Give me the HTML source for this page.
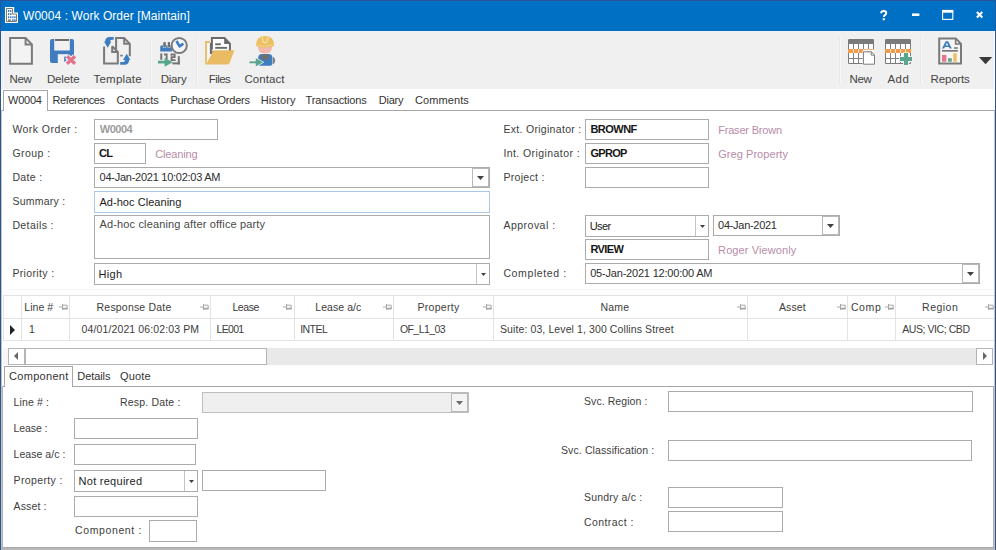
<!DOCTYPE html>
<html>
<head>
<meta charset="utf-8">
<title>W0004 : Work Order [Maintain]</title>
<style>
*{box-sizing:border-box;margin:0;padding:0}
html,body{width:996px;height:550px;overflow:hidden;background:#fff}
body{position:relative;font-family:"Liberation Sans",sans-serif;font-size:12px;color:#3a3a3a}
.a{position:absolute}
.t{position:absolute;white-space:nowrap;line-height:14px}
.f{position:absolute;background:#fff;border:1px solid #ababab}
.dd{position:absolute;top:0;bottom:0;right:0;width:17px;border:1px solid #b9b9b9;background:#fff}
.dd:after{content:"";position:absolute;left:4px;top:7px;width:7px;height:4px;background:#404040;clip-path:polygon(0 0,100% 0,50% 100%)}
.dd.dis:after{background:#6a6a6a}
.cb{position:absolute;top:0;bottom:0;right:0;width:13px;border-left:1px solid #c4c4c4}
.cb:after{content:"";position:absolute;left:4px;top:9px;width:5px;height:3px;background:#404040;clip-path:polygon(0 0,100% 0,50% 100%)}
.vl{position:absolute;width:1px;background:#e3e3e3;top:295px;height:46px}
.hl{position:absolute;height:1px;background:#e3e3e3;left:3px;width:991px}
.pin{position:absolute;top:304px;width:10px;height:6px}
svg{position:absolute;overflow:visible}
</style>
</head>
<body>
<!-- window frame / title bar -->
<div class="a" style="left:0;top:0;width:996px;height:31px;background:#0070c4"></div>
<div class="a" style="left:0;top:0;width:996px;height:1px;background:#2a5699"></div>

<!-- toolbar -->
<div class="a" style="left:1px;top:31px;width:993px;height:58px;background:#f0f0f0"></div>
<!--ICONS_START-->
<svg width="996" height="92" viewBox="0 0 996 92" style="left:0;top:0">
<!-- app icon -->
<path d="M5,7 H14.2 V12.6 H18 V23 H5 Z" fill="#fff"/>
<path d="M6.5,8.5 H12.6 V14.1 H16.5 V21.5 H6.5 Z" fill="none" stroke="#82786f" stroke-width="1"/>
<g fill="#1a66b8">
<rect x="8.1" y="10" width="1.2" height="1.9"/><rect x="10.2" y="10" width="1.2" height="1.9"/>
<rect x="8.1" y="13.2" width="1.2" height="1.9"/><rect x="10.2" y="13.2" width="1.2" height="1.9"/>
<rect x="8.1" y="16.3" width="1.2" height="1.9"/><rect x="10.2" y="16.3" width="1.2" height="1.9"/>
<rect x="12.3" y="16.3" width="1.2" height="1.9"/><rect x="14.3" y="16.3" width="1.2" height="1.9"/>
<rect x="12.3" y="19.2" width="1.2" height="1.9"/><rect x="14.3" y="19.2" width="1.2" height="1.9"/>
</g>
<rect x="8" y="19.4" width="2.8" height="2" fill="#82786f"/>
<!-- window controls -->
<path d="M881.2,13.2 Q881.2,10.9 883.7,10.9 Q886.2,10.9 886.2,13 Q886.2,14.4 884.9,15.1 Q883.8,15.7 883.8,17.1" fill="none" stroke="#fff" stroke-width="2"/>
<rect x="882.7" y="18.2" width="2.2" height="2.1" fill="#fff"/>
<rect x="912" y="13.4" width="7.4" height="2.6" fill="#fff"/>
<rect x="942.6" y="11" width="10.2" height="8.4" fill="none" stroke="#fff" stroke-width="1.1"/>
<rect x="942" y="9.9" width="11.3" height="2.8" fill="#fff"/>
<path d="M976.9,11.9 L982.3,17.4 M982.3,11.9 L976.9,17.4" stroke="#fff" stroke-width="2.1" fill="none"/>

<!-- separators -->
<g>
<rect x="150" y="37" width="1" height="47" fill="#e8e8e8"/><rect x="151" y="37" width="1" height="47" fill="#f6f6f6"/>
<rect x="196" y="37" width="1" height="47" fill="#e8e8e8"/><rect x="197" y="37" width="1" height="47" fill="#f6f6f6"/>
<rect x="839" y="37" width="1" height="47" fill="#e8e8e8"/><rect x="840" y="37" width="1" height="47" fill="#f6f6f6"/>
<rect x="920" y="37" width="1" height="47" fill="#e8e8e8"/><rect x="921" y="37" width="1" height="47" fill="#f6f6f6"/>
</g>

<!-- New -->
<g fill="none" stroke="#7a7a7a" stroke-width="2" stroke-linejoin="miter">
<path d="M10.1,38.1 H25.6 L31.9,44.4 V63.7 H10.1 Z" fill="#f3f3f3"/>
<path d="M25.6,38.1 V44.4 H31.9"/>
</g>

<!-- Delete -->
<rect x="50" y="39" width="24" height="24" rx="2" fill="#3f7cc0"/>
<rect x="54.2" y="38.5" width="15.6" height="12" fill="#f1f1f1"/>
<rect x="55" y="39" width="14" height="2" fill="#6e6e6e"/>
<rect x="57.8" y="54.2" width="10.5" height="9.3" fill="#f1f1f1"/>
<rect x="64.2" y="56.6" width="1.9" height="5" fill="#3f7cc0"/>
<path d="M67,56.3 L75,63.7 M75,56.3 L67,63.7" stroke="#f1f1f1" stroke-width="5.6" fill="none"/>
<path d="M67,56.3 L75,63.7 M75,56.3 L67,63.7" stroke="#e3728c" stroke-width="3.3" fill="none"/>

<!-- Template -->
<g fill="none" stroke="#7a7a7a" stroke-width="2">
<path d="M116.1,49.5 V38.1 H124.2 L129.8,43.8 V56.2"/>
<path d="M124.2,38.1 V43.8 H129.8"/>
<path d="M120.2,55.6 H122.8" stroke-width="1.6"/>
<path d="M104.1,46.5 V63.5 H117.8 V52 L112.2,46.2"/>
<path d="M112.2,46.2 V52 H117.8"/>
</g>
<g fill="#3f7cc0">
<path d="M113.7,37 H109.4 Q105.2,37 105.2,41.6 H104 L107.7,47.8 L111.3,41.6 H110 Q110,39.8 112,39.8 H113.7 Z"/>
<path d="M120.2,64.8 V62.1 H123.4 Q124.9,62.1 124.9,60 H123 L126.7,53.7 L130.4,60 H129.1 Q129.1,64.8 124.4,64.8 Z"/>
</g>

<!-- Diary -->
<path d="M160.2,51.6 V47 Q160.2,45.2 162,45.2 H172 V51.6 Z" fill="#3f7cc0"/>
<rect x="162.9" y="41.8" width="3.2" height="6" fill="#f1f1f1"/>
<rect x="167.5" y="41.8" width="2.9" height="6" fill="#f1f1f1"/>
<rect x="163.3" y="42.1" width="2.5" height="5.3" fill="#6c6c6c"/>
<rect x="167.8" y="42.1" width="2.2" height="5.3" fill="#6c6c6c"/>
<g fill="#737373">
<rect x="160.3" y="53.4" width="2" height="6.4"/>
<rect x="177.8" y="56.2" width="2" height="8.2"/>
<rect x="172.4" y="62.4" width="7.4" height="2"/>
<path d="M164,53.5 H167.6 V59.5 H165.7 V55.4 H164 Z"/>
<path d="M170.6,55.8 V53.5 H175.6 V58 H172.7 V59.2 H175.6 V61.1 H170.6 V56.3 H173.6 V55.3 H172.5 V55.8 Z"/>
</g>
<circle cx="179.2" cy="45.5" r="7.6" fill="#f5f5f5" stroke="#7a7a7a" stroke-width="2"/>
<path d="M176.5,41 L179.6,46.4 L183.4,43.6" fill="none" stroke="#3f7cc0" stroke-width="2.6" stroke-linejoin="round"/>
<path d="M158,60.8 H164.6 V57.8 L172.8,62.2 L164.6,66.8 V63.6 H158 Z" fill="#5aa58d"/>

<!-- Files -->
<path d="M205.1,41.1 H209.8 V43 H207 V62 L205.5,64.4 H205.1 Z" fill="#e9bb63"/>
<path d="M211.9,53 V38.1 H224.5 L229.9,43.6 V51" fill="#fff" stroke="#6a6a6a" stroke-width="2"/>
<path d="M224.2,38 L230.2,44 H224.2 Z" fill="#6a6a6a"/>
<rect x="215.2" y="43.3" width="5.6" height="1.9" fill="#6a6a6a"/>
<rect x="215.2" y="46.9" width="11.8" height="1.9" fill="#6a6a6a"/>
<path d="M213.6,50.2 H234.4 L229.6,63 Q229,64.4 227.6,64.4 H205.6 L207.4,62 Z" fill="#e9bb63"/>
<path d="M206.9,43 V62.5 L213.2,49.5 H211 V43 Z" fill="#f6f6f6"/>
<path d="M210.9,43 V54 " stroke="#6a6a6a" stroke-width="2" fill="none"/>

<!-- Contact -->
<path d="M257.8,46 H272.2 Q272.4,53.6 265,53.6 Q257.6,53.6 257.8,46 Z" fill="#f1b9b0"/>
<path d="M256,45.2 Q256.3,36 265.1,36 Q273.9,36 274.2,45.2 Q274.2,46.5 272.8,46.5 Q265,48.4 257.4,46.5 Q256,46.5 256,45.2 Z" fill="#edc163"/>
<path d="M262,37.2 L263.2,42 Q265.1,43.2 267,42 L268.2,37.2" fill="none" stroke="#f6e2b4" stroke-width="1.1"/>
<path d="M257,45 Q265,47.2 273.2,45" fill="none" stroke="#f3d596" stroke-width="0.8"/>
<path d="M258.2,58 Q258.2,53.9 262,53.9 H268.6 Q272.4,53.9 272.4,58 V63.5 Q272.4,65.8 270,65.8 H260.5 Q258.2,65.8 258.2,63.5 Z" fill="#3f7cc0"/>
<rect x="261" y="54.4" width="8" height="5" rx="0.8" fill="#707070"/>
<path d="M272.9,56.6 Q275.2,58 275.2,60.5 Q275.2,63 272.9,64.2 Z" fill="#808080"/>
<path d="M249,61 H255.4 V57.5 L263.7,62.3 L255.4,67.1 V63.7 H249 Z" fill="#5aa58d" stroke="#f1f1f1" stroke-width="0.8"/>

<!-- grid New -->
<rect x="848" y="39" width="26" height="25" rx="1.2" fill="#7a7a7a"/>
<rect x="849" y="44" width="24" height="19" fill="#fff"/>
<rect x="853" y="44" width="1" height="19" fill="#808080"/>
<rect x="858" y="44" width="1" height="19" fill="#808080"/>
<rect x="863" y="44" width="1" height="19" fill="#808080"/>
<rect x="868" y="44" width="1" height="19" fill="#808080"/>
<rect x="849" y="58" width="24" height="1" fill="#808080"/>
<rect x="848" y="49" width="26" height="4" fill="#f19a47"/>
<rect x="853" y="49" width="1" height="4" fill="#fbe6d2"/>
<rect x="858" y="49" width="1" height="4" fill="#fbe6d2"/>
<rect x="863" y="49" width="1" height="4" fill="#fbe6d2"/>
<rect x="868" y="49" width="1" height="4" fill="#fbe6d2"/>
<rect x="864" y="49.8" width="10" height="3.4" fill="#fff"/>
<path d="M862.4,50.8 H872 L875.5,54.3 V65.2 H862.4 Z" fill="#f6f6f6"/>
<path d="M863.4,51.8 H871.4 L874.5,54.9 V64.2 H863.4 Z" fill="#fff" stroke="#7a7a7a" stroke-width="1"/>
<path d="M871.2,52 V55.1 H874.4" fill="none" stroke="#7a7a7a" stroke-width="1"/>

<!-- grid Add -->
<rect x="885" y="39" width="26" height="25" rx="1.2" fill="#7a7a7a"/>
<rect x="886" y="44" width="24" height="19" fill="#fff"/>
<rect x="890" y="44" width="1" height="19" fill="#808080"/>
<rect x="895" y="44" width="1" height="19" fill="#808080"/>
<rect x="900" y="44" width="1" height="19" fill="#808080"/>
<rect x="905" y="44" width="1" height="19" fill="#808080"/>
<rect x="886" y="58" width="24" height="1" fill="#808080"/>
<rect x="885" y="49" width="26" height="4" fill="#f19a47"/>
<rect x="890" y="49" width="1" height="4" fill="#fbe6d2"/>
<rect x="895" y="49" width="1" height="4" fill="#fbe6d2"/>
<rect x="900" y="49" width="1" height="4" fill="#fbe6d2"/>
<rect x="905" y="49" width="1" height="4" fill="#fbe6d2"/>
<path d="M903.2,52.3 H908.8 V56.3 H912.8 V61.9 H908.8 V65.9 H903.2 V61.9 H899.2 V56.3 H903.2 Z" fill="#f4f4f4"/>
<path d="M904,53.1 H908 V57.1 H912 V61.1 H908 V65.1 H904 V61.1 H900 V57.1 H904 Z" fill="#5aa58d"/>

<!-- Reports -->
<path d="M939.2,38.5 H955.8 L961,43.8 V63.5 H939.2 Z" fill="#f6f6f6" stroke="#7a7a7a" stroke-width="2"/>
<path d="M955.6,38.5 V44 H961" fill="none" stroke="#7a7a7a" stroke-width="1.6"/>
<path d="M942,48.5 L945.6,41.3 H948.2 L951.8,48.5 H949.6 L948.9,47 H944.9 L944.2,48.5 Z M945.6,45.4 H948.2 L946.9,42.7 Z" fill="#3f7cc0" fill-rule="evenodd"/>
<rect x="954" y="47.2" width="3.8" height="1.6" fill="#7a7a7a"/>
<rect x="942" y="50" width="15.8" height="1.7" fill="#7a7a7a"/>
<rect x="942" y="54.9" width="4.4" height="6.8" fill="#e8748e"/>
<rect x="948" y="58.2" width="3.8" height="3.5" fill="#5aa58d"/>
<rect x="953.2" y="53.3" width="3.6" height="8.4" fill="#edc163"/>
<path d="M978.9,57.1 H992.2 L985.55,64.3 Z" fill="#3a3a3a"/>
</svg>
<!--ICONS_END-->

<!-- main tabs -->
<div class="a" style="left:1px;top:110px;width:993px;height:1px;background:#a6a6a6"></div>
<div class="a" style="left:3px;top:90px;width:45px;height:21px;background:#fff;border:1px solid #a6a6a6;border-bottom:none"></div>

<!-- form fields left -->
<div class="f" style="left:94px;top:119px;width:124px;height:21px"></div>
<div class="f" style="left:94px;top:143px;width:52px;height:21px"></div>
<div class="f" style="left:94px;top:167px;width:396px;height:21px"><div class="dd"></div></div>
<div class="f" style="left:94px;top:191px;width:396px;height:22px;border-color:#a9c7ec"></div>
<div class="f" style="left:94px;top:215px;width:396px;height:44px"></div>
<div class="f" style="left:94px;top:263px;width:396px;height:22px"><div class="cb"></div></div>

<!-- form fields right -->
<div class="f" style="left:585px;top:119px;width:124px;height:21px"></div>
<div class="f" style="left:585px;top:143px;width:124px;height:21px"></div>
<div class="f" style="left:585px;top:167px;width:124px;height:21px"></div>
<div class="f" style="left:585px;top:215px;width:124px;height:22px"><div class="cb"></div></div>
<div class="f" style="left:713px;top:215px;width:127px;height:21px"><div class="dd"></div></div>
<div class="f" style="left:585px;top:239px;width:124px;height:21px"></div>
<div class="f" style="left:585px;top:263px;width:395px;height:21px"><div class="dd"></div></div>

<!-- grid -->
<div class="a" style="left:8px;top:289px;width:985px;height:1px;background:#f4f4f4"></div>
<div class="hl" style="top:295px"></div>
<div class="hl" style="top:318px"></div>
<div class="hl" style="top:340px"></div>
<div class="vl" style="left:3px"></div>
<div class="vl" style="left:21px"></div>
<div class="vl" style="left:69px"></div>
<div class="vl" style="left:210px"></div>
<div class="vl" style="left:294px"></div>
<div class="vl" style="left:393px"></div>
<div class="vl" style="left:493px"></div>
<div class="vl" style="left:747px"></div>
<div class="vl" style="left:847px"></div>
<div class="vl" style="left:895px"></div>
<div class="a" style="left:10px;top:325px;border-top:5px solid transparent;border-bottom:5px solid transparent;border-left:5px solid #222"></div>
<!--PINS_START-->
<svg class="pin" style="left:59px" viewBox="0 0 10 6"><path d="M0,3 H3.5 M3.5,0 V6 M3.5,1.2 H8.2 V5 H3.5" fill="none" stroke="#a9a9a9" stroke-width="1"/><path d="M3.5,4.4 H8.7" stroke="#a9a9a9" stroke-width="1.5"/></svg>
<svg class="pin" style="left:199.5px" viewBox="0 0 10 6"><path d="M0,3 H3.5 M3.5,0 V6 M3.5,1.2 H8.2 V5 H3.5" fill="none" stroke="#a9a9a9" stroke-width="1"/><path d="M3.5,4.4 H8.7" stroke="#a9a9a9" stroke-width="1.5"/></svg>
<svg class="pin" style="left:283.2px" viewBox="0 0 10 6"><path d="M0,3 H3.5 M3.5,0 V6 M3.5,1.2 H8.2 V5 H3.5" fill="none" stroke="#a9a9a9" stroke-width="1"/><path d="M3.5,4.4 H8.7" stroke="#a9a9a9" stroke-width="1.5"/></svg>
<svg class="pin" style="left:383px" viewBox="0 0 10 6"><path d="M0,3 H3.5 M3.5,0 V6 M3.5,1.2 H8.2 V5 H3.5" fill="none" stroke="#a9a9a9" stroke-width="1"/><path d="M3.5,4.4 H8.7" stroke="#a9a9a9" stroke-width="1.5"/></svg>
<svg class="pin" style="left:483px" viewBox="0 0 10 6"><path d="M0,3 H3.5 M3.5,0 V6 M3.5,1.2 H8.2 V5 H3.5" fill="none" stroke="#a9a9a9" stroke-width="1"/><path d="M3.5,4.4 H8.7" stroke="#a9a9a9" stroke-width="1.5"/></svg>
<svg class="pin" style="left:737.3px" viewBox="0 0 10 6"><path d="M0,3 H3.5 M3.5,0 V6 M3.5,1.2 H8.2 V5 H3.5" fill="none" stroke="#a9a9a9" stroke-width="1"/><path d="M3.5,4.4 H8.7" stroke="#a9a9a9" stroke-width="1.5"/></svg>
<svg class="pin" style="left:837.3px" viewBox="0 0 10 6"><path d="M0,3 H3.5 M3.5,0 V6 M3.5,1.2 H8.2 V5 H3.5" fill="none" stroke="#a9a9a9" stroke-width="1"/><path d="M3.5,4.4 H8.7" stroke="#a9a9a9" stroke-width="1.5"/></svg>
<svg class="pin" style="left:885.3px" viewBox="0 0 10 6"><path d="M0,3 H3.5 M3.5,0 V6 M3.5,1.2 H8.2 V5 H3.5" fill="none" stroke="#a9a9a9" stroke-width="1"/><path d="M3.5,4.4 H8.7" stroke="#a9a9a9" stroke-width="1.5"/></svg>
<svg class="pin" style="left:985.3px" viewBox="0 0 10 6"><path d="M0,3 H3.5 M3.5,0 V6 M3.5,1.2 H8.2 V5 H3.5" fill="none" stroke="#a9a9a9" stroke-width="1"/><path d="M3.5,4.4 H8.7" stroke="#a9a9a9" stroke-width="1.5"/></svg>
<!--PINS_END-->

<!-- scrollbar -->
<div class="a" style="left:3px;top:348px;width:991px;height:17px;background:#f6f6f6"></div><div class="a" style="left:8px;top:348px;width:985px;height:17px;background:#e9e9e9"></div>
<div class="a" style="left:8px;top:348px;width:17px;height:17px;background:#fff;border:1px solid #b4b4b4"></div>
<div class="a" style="left:14px;top:352px;border-top:4px solid transparent;border-bottom:4px solid transparent;border-right:4px solid #666"></div>
<div class="a" style="left:25px;top:348px;width:242px;height:17px;background:#fff;border:1px solid #b4b4b4"></div>
<div class="a" style="left:976px;top:348px;width:17px;height:17px;background:#fff;border:1px solid #b4b4b4"></div>
<div class="a" style="left:983px;top:352px;border-top:4px solid transparent;border-bottom:4px solid transparent;border-left:4px solid #666"></div>

<!-- bottom tabs -->
<div class="a" style="left:2px;top:386px;width:992px;height:1px;background:#a6a6a6"></div>
<div class="a" style="left:4px;top:366px;width:69px;height:21px;background:#fff;border:1px solid #a6a6a6;border-bottom:none"></div>

<!-- bottom panel fields -->
<div class="f" style="left:202px;top:392px;width:267px;height:21px;background:#efefef;border-color:#bdbdbd"><div class="dd dis" style="background:#f4f4f4"></div></div>
<div class="f" style="left:74px;top:418px;width:124px;height:21px"></div>
<div class="f" style="left:74px;top:444px;width:122px;height:21px"></div>
<div class="f" style="left:74px;top:470px;width:124px;height:22px"><div class="cb"></div></div>
<div class="f" style="left:202px;top:470px;width:124px;height:21px"></div>
<div class="f" style="left:74px;top:496px;width:124px;height:21px"></div>
<div class="f" style="left:149px;top:520px;width:48px;height:22px"></div>
<div class="f" style="left:668px;top:391px;width:305px;height:21px"></div>
<div class="f" style="left:668px;top:440px;width:304px;height:21px"></div>
<div class="f" style="left:668px;top:487px;width:115px;height:21px"></div>
<div class="f" style="left:668px;top:511px;width:115px;height:21px"></div>

<div class="t" style="left:23.00px;top:9.04px;font-size:12px;color:#ffffff;letter-spacing:0.059px">W0004 : Work Order [Maintain]</div>
<div class="t" style="left:9.60px;top:71.62px;font-size:11.5px;color:#444444;letter-spacing:-0.350px">New</div>
<div class="t" style="left:46.90px;top:71.62px;font-size:11.5px;color:#444444;letter-spacing:-0.109px">Delete</div>
<div class="t" style="left:93.60px;top:71.62px;font-size:11.5px;color:#444444;letter-spacing:0.190px">Template</div>
<div class="t" style="left:160.70px;top:71.62px;font-size:11.5px;color:#444444;letter-spacing:-0.221px">Diary</div>
<div class="t" style="left:208.80px;top:71.62px;font-size:11.5px;color:#444444;letter-spacing:-0.558px">Files</div>
<div class="t" style="left:244.40px;top:71.62px;font-size:11.5px;color:#444444;letter-spacing:0.077px">Contact</div>
<div class="t" style="left:849.40px;top:71.62px;font-size:11.5px;color:#444444;letter-spacing:-0.250px">New</div>
<div class="t" style="left:887.40px;top:71.62px;font-size:11.5px;color:#444444;letter-spacing:0.467px">Add</div>
<div class="t" style="left:930.60px;top:71.62px;font-size:11.5px;color:#444444;letter-spacing:-0.186px">Reports</div>
<div class="t" style="left:8.00px;top:93.19px;font-size:11px;color:#333333;letter-spacing:-0.234px">W0004</div>
<div class="t" style="left:52.60px;top:93.19px;font-size:11px;color:#333333;letter-spacing:-0.439px">References</div>
<div class="t" style="left:116.50px;top:93.19px;font-size:11px;color:#333333;letter-spacing:-0.173px">Contacts</div>
<div class="t" style="left:170.40px;top:93.19px;font-size:11px;color:#333333;letter-spacing:-0.260px">Purchase Orders</div>
<div class="t" style="left:260.80px;top:93.19px;font-size:11px;color:#333333;letter-spacing:0.079px">History</div>
<div class="t" style="left:305.60px;top:93.19px;font-size:11px;color:#333333;letter-spacing:-0.124px">Transactions</div>
<div class="t" style="left:378.70px;top:93.19px;font-size:11px;color:#333333;letter-spacing:-0.217px">Diary</div>
<div class="t" style="left:415.00px;top:93.19px;font-size:11px;color:#333333;letter-spacing:0.089px">Comments</div>
<div class="t" style="left:12.40px;top:122.06px;font-size:10.5px;color:#3d3d3d;letter-spacing:0.447px">Work Order :</div>
<div class="t" style="left:12.40px;top:146.06px;font-size:10.5px;color:#3d3d3d;letter-spacing:0.450px">Group :</div>
<div class="t" style="left:12.40px;top:170.06px;font-size:10.5px;color:#3d3d3d;letter-spacing:0.341px">Date :</div>
<div class="t" style="left:12.40px;top:194.06px;font-size:10.5px;color:#3d3d3d;letter-spacing:0.258px">Summary :</div>
<div class="t" style="left:12.40px;top:218.06px;font-size:10.5px;color:#3d3d3d;letter-spacing:0.399px">Details :</div>
<div class="t" style="left:12.40px;top:266.06px;font-size:10.5px;color:#3d3d3d;letter-spacing:0.357px">Priority :</div>
<div class="t" style="left:503.40px;top:122.06px;font-size:10.5px;color:#3d3d3d;letter-spacing:0.305px">Ext. Originator :</div>
<div class="t" style="left:503.40px;top:146.06px;font-size:10.5px;color:#3d3d3d;letter-spacing:0.423px">Int. Originator :</div>
<div class="t" style="left:503.40px;top:170.06px;font-size:10.5px;color:#3d3d3d;letter-spacing:0.325px">Project :</div>
<div class="t" style="left:503.40px;top:218.06px;font-size:10.5px;color:#3d3d3d;letter-spacing:0.494px">Approval :</div>
<div class="t" style="left:503.40px;top:266.06px;font-size:10.5px;color:#3d3d3d;letter-spacing:0.621px">Completed :</div>
<div class="t" style="left:99.80px;top:121.89px;font-size:11px;color:#9c9c9c;letter-spacing:-0.509px;font-weight:bold">W0004</div>
<div class="t" style="left:99.10px;top:146.19px;font-size:11px;color:#161616;letter-spacing:-0.700px;font-weight:bold">CL</div>
<div class="t" style="left:155.20px;top:147.19px;font-size:11px;color:#b88ca8;letter-spacing:-0.157px">Cleaning</div>
<div class="t" style="left:99.60px;top:170.19px;font-size:11px;color:#2e2e2e;letter-spacing:-0.261px">04-Jan-2021 10:02:03 AM</div>
<div class="t" style="left:99.40px;top:195.19px;font-size:11px;color:#1c1c1c;letter-spacing:0.049px">Ad-hoc Cleaning</div>
<div class="t" style="left:99.40px;top:217.39px;font-size:11px;color:#484848;letter-spacing:0.154px">Ad-hoc cleaning after office party</div>
<div class="t" style="left:98.40px;top:266.99px;font-size:11px;color:#1c1c1c;letter-spacing:0.332px">High</div>
<div class="t" style="left:590.40px;top:122.19px;font-size:11px;color:#161616;letter-spacing:-0.514px;font-weight:bold">BROWNF</div>
<div class="t" style="left:590.40px;top:146.19px;font-size:11px;color:#161616;letter-spacing:-0.700px;font-weight:bold">GPROP</div>
<div class="t" style="left:718.20px;top:123.19px;font-size:11px;color:#b88ca8;letter-spacing:-0.191px">Fraser Brown</div>
<div class="t" style="left:718.20px;top:147.19px;font-size:11px;color:#b88ca8;letter-spacing:0.060px">Greg Property</div>
<div class="t" style="left:589.80px;top:218.69px;font-size:11px;color:#1c1c1c;letter-spacing:-0.621px">User</div>
<div class="t" style="left:590.40px;top:242.19px;font-size:11px;color:#161616;letter-spacing:-0.594px;font-weight:bold">RVIEW</div>
<div class="t" style="left:590.20px;top:266.19px;font-size:11px;color:#2e2e2e;letter-spacing:-0.197px">05-Jan-2021 12:00:00 AM</div>
<div class="t" style="left:718.10px;top:218.19px;font-size:11px;color:#2e2e2e;letter-spacing:-0.295px">04-Jan-2021</div>
<div class="t" style="left:718.10px;top:243.19px;font-size:11px;color:#b88ca8;letter-spacing:0.105px">Roger Viewonly</div>
<div class="t" style="left:24.30px;top:300.36px;font-size:10.5px;color:#3d3d3d;letter-spacing:0.026px">Line #</div>
<div class="t" style="left:96.60px;top:300.36px;font-size:10.5px;color:#3d3d3d;letter-spacing:0.189px">Response Date</div>
<div class="t" style="left:232.40px;top:300.36px;font-size:10.5px;color:#3d3d3d;letter-spacing:-0.392px">Lease</div>
<div class="t" style="left:315.30px;top:300.36px;font-size:10.5px;color:#3d3d3d;letter-spacing:0.052px">Lease a/c</div>
<div class="t" style="left:417.50px;top:300.36px;font-size:10.5px;color:#3d3d3d;letter-spacing:0.281px">Property</div>
<div class="t" style="left:600.40px;top:300.36px;font-size:10.5px;color:#3d3d3d;letter-spacing:0.244px">Name</div>
<div class="t" style="left:779.00px;top:300.36px;font-size:10.5px;color:#3d3d3d;letter-spacing:0.089px">Asset</div>
<div class="t" style="left:850.90px;top:300.36px;font-size:10.5px;color:#3d3d3d;letter-spacing:0.610px">Comp</div>
<div class="t" style="left:922.10px;top:300.36px;font-size:10.5px;color:#3d3d3d;letter-spacing:0.473px">Region</div>
<div class="t" style="left:28.90px;top:322.36px;font-size:10.5px;color:#3d3d3d">1</div>
<div class="t" style="left:81.60px;top:322.36px;font-size:10.5px;color:#3d3d3d;letter-spacing:0.116px">04/01/2021 06:02:03 PM</div>
<div class="t" style="left:216.60px;top:322.36px;font-size:10.5px;color:#3d3d3d;letter-spacing:-0.700px">LE001</div>
<div class="t" style="left:300.20px;top:322.36px;font-size:10.5px;color:#3d3d3d;letter-spacing:-0.554px">INTEL</div>
<div class="t" style="left:399.90px;top:322.36px;font-size:10.5px;color:#3d3d3d;letter-spacing:-0.554px">OF_L1_03</div>
<div class="t" style="left:500.00px;top:322.36px;font-size:10.5px;color:#3d3d3d;letter-spacing:0.102px">Suite: 03, Level 1, 300 Collins Street</div>
<div class="t" style="left:902.30px;top:322.36px;font-size:10.5px;color:#3d3d3d;letter-spacing:-0.437px">AUS; VIC; CBD</div>
<div class="t" style="left:9.00px;top:369.19px;font-size:11px;color:#333333;letter-spacing:0.311px">Component</div>
<div class="t" style="left:77.30px;top:369.19px;font-size:11px;color:#333333;letter-spacing:-0.071px">Details</div>
<div class="t" style="left:120.00px;top:369.19px;font-size:11px;color:#333333;letter-spacing:0.188px">Quote</div>
<div class="t" style="left:13.50px;top:395.36px;font-size:10.5px;color:#3d3d3d;letter-spacing:0.139px">Line # :</div>
<div class="t" style="left:120.00px;top:395.36px;font-size:10.5px;color:#3d3d3d;letter-spacing:0.178px">Resp. Date :</div>
<div class="t" style="left:13.50px;top:421.36px;font-size:10.5px;color:#3d3d3d;letter-spacing:-0.088px">Lease :</div>
<div class="t" style="left:13.50px;top:447.36px;font-size:10.5px;color:#3d3d3d;letter-spacing:0.055px">Lease a/c :</div>
<div class="t" style="left:13.50px;top:473.36px;font-size:10.5px;color:#3d3d3d;letter-spacing:0.378px">Property :</div>
<div class="t" style="left:13.50px;top:499.36px;font-size:10.5px;color:#3d3d3d;letter-spacing:0.154px">Asset :</div>
<div class="t" style="left:75.00px;top:523.36px;font-size:10.5px;color:#3d3d3d;letter-spacing:0.620px">Component :</div>
<div class="t" style="left:78.60px;top:473.69px;font-size:11px;color:#1c1c1c;letter-spacing:0.262px">Not required</div>
<div class="t" style="left:584.00px;top:393.86px;font-size:10.5px;color:#3d3d3d;letter-spacing:0.073px">Svc. Region :</div>
<div class="t" style="left:561.00px;top:442.76px;font-size:10.5px;color:#3d3d3d;letter-spacing:0.109px">Svc. Classification :</div>
<div class="t" style="left:584.00px;top:490.36px;font-size:10.5px;color:#3d3d3d;letter-spacing:0.199px">Sundry a/c :</div>
<div class="t" style="left:584.00px;top:515.36px;font-size:10.5px;color:#3d3d3d;letter-spacing:0.422px">Contract :</div>

<!-- frame edges -->
<div class="a" style="left:1px;top:110px;width:1px;height:440px;background:#c2c2c2"></div>
<div class="a" style="left:994px;top:110px;width:1px;height:440px;background:#c2c2c2"></div>
<div class="a" style="left:2px;top:386px;width:1px;height:162px;background:#b0b0b0"></div>
<div class="a" style="left:993px;top:386px;width:1px;height:162px;background:#b0b0b0"></div>
<div class="a" style="left:2px;top:547px;width:992px;height:1px;background:#a8a8a8"></div>
<div class="a" style="left:1px;top:548px;width:994px;height:2px;background:#b8b8b8"></div>
<div class="a" style="left:0;top:0;width:1px;height:550px;background:#2a5699"></div>
<div class="a" style="left:995px;top:0;width:1px;height:550px;background:#2a5699"></div>
</body>
</html>
